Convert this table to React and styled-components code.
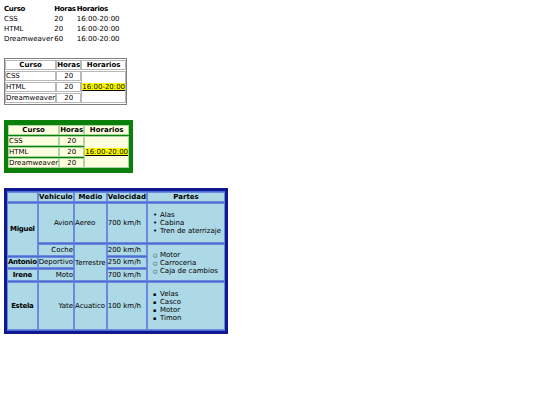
import React from "react";
import styled, { createGlobalStyle } from "styled-components";

const GlobalStyle = createGlobalStyle`
  body {
    margin: 4px;
    font-family: "DejaVu Sans", Verdana, sans-serif;
    font-size: 7px;
    line-height: 8px;
    color: #000;
    background: #fff;
  }
`;

const Page = styled.div`
  display: flex;
  flex-direction: column;
  align-items: flex-start;
  gap: 15px;
`;

const PlainTable = styled.table`
  border-collapse: separate;
  border-spacing: 1px;
  margin: -1px;
  th, td {
    padding: 0.5px 0;
    text-align: left;
  }
  th { font-weight: bold; letter-spacing: -0.3px; }
`;

const GrayTable = styled.table`
  border-collapse: separate;
  border-spacing: 0 1px;
  border: 1px solid #808080;
  background: #fff;
  th, td {
    border: 1px solid #b8b8b8;
    padding: 0;
    background: #fff;
  }
  th { text-align: center; font-weight: bold; }
`;

const GreenTable = styled.table`
  border-collapse: separate;
  border-spacing: 0 1px;
  border: 4px solid #0a800a;
  background: #0a800a;
  th, td {
    border: 1px solid #a8d8a0;
    padding: 0;
    background: #ffffe0;
  }
  th { text-align: center; font-weight: bold; }
`;

const BlueTable = styled.table`
  border-collapse: separate;
  border-spacing: 0 1px;
  border: 3px solid #101890;
  background: #4a6cd4;
  th, td {
    border: 1px solid #6a8ade;
    padding: 0;
    background: #add8e6;
  }
  th { text-align: center; font-weight: bold; }
`;

const RowHead = styled.th`
  letter-spacing: -0.3px;
`;

const Cell = styled.td`
  text-align: ${(p) => p.$align || "left"};
  vertical-align: middle;
`;

const Mark = styled.span`
  background: #ffff00;
  text-decoration: underline;
`;

const Parts = styled.ul`
  margin: ${(p) => (p.$tight ? "5.5px" : "7px")} 0;
  padding: 0 3px 0 12px;
  list-style: none;
  li::before {
    content: "${(p) => p.$bullet}";
    display: inline-block;
    width: 7px;
    margin-left: -7px;
    font-size: ${(p) => p.$size}px;
    line-height: 0;
  }
`;

const courses = [
  ["CSS", "20"],
  ["HTML", "20"],
  ["Dreamweaver", "60"],
];

function BoxedCourses({ Table }) {
  return (
    <Table>
      <tbody>
        <tr>
          <th>Curso</th>
          <th>Horas</th>
          <th>Horarios</th>
        </tr>
        {courses.map(([c], i) => (
          <tr key={c}>
            <Cell>{c}</Cell>
            <Cell $align="center">20</Cell>
            {i === 0 && (
              <Cell rowSpan={3}>
                <Mark>16:00-20:00</Mark>
              </Cell>
            )}
          </tr>
        ))}
      </tbody>
    </Table>
  );
}

export default function App() {
  return (
    <>
      <GlobalStyle />
      <Page>
        <PlainTable>
          <tbody>
            <tr>
              <th>Curso</th>
              <th>Horas</th>
              <th>Horarios</th>
            </tr>
            {courses.map(([c, h]) => (
              <tr key={c}>
                <td>{c}</td>
                <td>{h}</td>
                <td>16:00-20:00</td>
              </tr>
            ))}
          </tbody>
        </PlainTable>

        <BoxedCourses Table={GrayTable} />
        <BoxedCourses Table={GreenTable} />

        <BlueTable>
          <tbody>
            <tr>
              <th></th>
              <th>Vehiculo</th>
              <th>Medio</th>
              <th>Velocidad</th>
              <th>Partes</th>
            </tr>
            <tr>
              <RowHead rowSpan={2}>Miguel</RowHead>
              <Cell $align="right">Avion</Cell>
              <Cell>Aereo</Cell>
              <Cell>700 km/h</Cell>
              <Cell>
                <Parts $bullet="•" $size={7}>
                  <li>Alas</li>
                  <li>Cabina</li>
                  <li>Tren de aterrizaje</li>
                </Parts>
              </Cell>
            </tr>
            <tr>
              <Cell $align="right">Coche</Cell>
              <Cell rowSpan={3}>Terrestre</Cell>
              <Cell>200 km/h</Cell>
              <Cell rowSpan={3}>
                <Parts $bullet="○" $size={5} $tight>
                  <li>Motor</li>
                  <li>Carroceria</li>
                  <li>Caja de cambios</li>
                </Parts>
              </Cell>
            </tr>
            <tr>
              <RowHead>Antonio</RowHead>
              <Cell $align="right">Deportivo</Cell>
              <Cell>250 km/h</Cell>
            </tr>
            <tr>
              <RowHead>Irene</RowHead>
              <Cell $align="right">Moto</Cell>
              <Cell>700 km/h</Cell>
            </tr>
            <tr>
              <RowHead>Estela</RowHead>
              <Cell $align="right">Yate</Cell>
              <Cell>Acuatico</Cell>
              <Cell>100 km/h</Cell>
              <Cell>
                <Parts $bullet="▪" $size={5}>
                  <li>Velas</li>
                  <li>Casco</li>
                  <li>Motor</li>
                  <li>Timon</li>
                </Parts>
              </Cell>
            </tr>
          </tbody>
        </BlueTable>
      </Page>
    </>
  );
}
